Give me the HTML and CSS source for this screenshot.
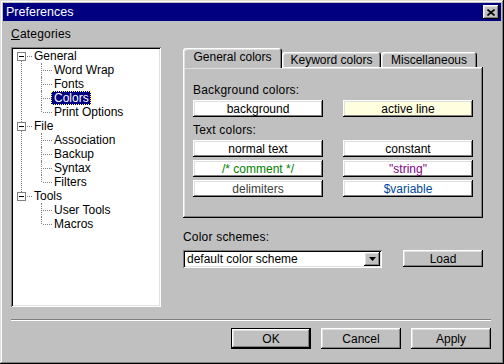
FILE: index.html
```html
<!DOCTYPE html>
<html lang="en">
<head>
<meta charset="UTF-8" />
<title>Preferences</title>
<link rel="stylesheet" href="styles.css">
</head>
<body>

<div class="window">
  <div class="titlebar">
    <span class="title">Preferences</span>
    <span class="close-btn" aria-label="Close">
      <svg width="8" height="7" viewBox="0 0 8 7"><path d="M0.5 0.5 L7.5 6.5 M7.5 0.5 L0.5 6.5" stroke="#000" stroke-width="1.6" fill="none"/></svg>
    </span>
  </div>

  <div class="client">
    <div class="main">
      <div class="left-col">
        <div class="field-label"><u>C</u>ategories</div>
        <div class="tree">
          <ul class="tree-root">
            <li class="group">
              <div class="top-row"><span class="expander"></span><span class="dash"></span><span class="node">General</span></div>
              <ul class="children">
                <li class="child"><span class="node">Word Wrap</span></li>
                <li class="child"><span class="node">Fonts</span></li>
                <li class="child"><span class="node selected">Colors</span></li>
                <li class="child"><span class="node">Print Options</span></li>
              </ul>
            </li>
            <li class="group">
              <div class="top-row"><span class="expander"></span><span class="dash"></span><span class="node">File</span></div>
              <ul class="children">
                <li class="child"><span class="node">Association</span></li>
                <li class="child"><span class="node">Backup</span></li>
                <li class="child"><span class="node">Syntax</span></li>
                <li class="child"><span class="node">Filters</span></li>
              </ul>
            </li>
            <li class="group">
              <div class="top-row"><span class="expander"></span><span class="dash"></span><span class="node">Tools</span></div>
              <ul class="children">
                <li class="child"><span class="node">User Tools</span></li>
                <li class="child"><span class="node">Macros</span></li>
              </ul>
            </li>
          </ul>
        </div>
      </div>

      <div class="right-col">
        <div class="tabs">
          <div class="tab active tab-general">General colors</div>
          <div class="tab tab-keyword">Keyword colors</div>
          <div class="tab tab-misc">Miscellaneous</div>
        </div>
        <div class="tab-page">
          <div class="field-label">Background colors:</div>
          <div class="color-grid">
            <div class="btn color-btn">background</div>
            <div class="btn color-btn active-line">active line</div>
          </div>
          <div class="field-label spaced">Text colors:</div>
          <div class="color-grid">
            <div class="btn color-btn">normal text</div>
            <div class="btn color-btn">constant</div>
            <div class="btn color-btn c-comment">/* comment */</div>
            <div class="btn color-btn c-string">"string"</div>
            <div class="btn color-btn c-delim">delimiters</div>
            <div class="btn color-btn c-var">$variable</div>
          </div>
        </div>

        <div class="field-label schemes-label">Color schemes:</div>
        <div class="schemes-row">
          <div class="select">
            <span class="select-text">default color scheme</span>
            <span class="btn arrow-btn">
              <svg width="7" height="4" viewBox="0 0 7 4"><path d="M0 0 H7 L3.5 4 Z" fill="#000"/></svg>
            </span>
          </div>
          <div class="btn load-btn">Load</div>
        </div>
      </div>
    </div>

    <div class="separator"></div>

    <div class="actions">
      <div class="btn dialog-btn default">OK</div>
      <div class="btn dialog-btn">Cancel</div>
      <div class="btn dialog-btn">Apply</div>
    </div>
  </div>
</div>

</body>
</html>
```

FILE: styles.css
```css
body {
  margin: 0;
  background: #c0c0c0;
  font-family: "Liberation Sans", Arial, sans-serif;
  font-size: 12px;
  color: #000;
}

ul {
  list-style: none;
  margin: 0;
  padding: 0;
}

/* Marco de la ventana */
.window {
  width: 504px;
  height: 364px;
  box-sizing: border-box;
  padding: 3px;
  background: #c0c0c0;
  box-shadow: inset -1px -1px #000, inset 1px 1px #dfdfdf,
              inset -2px -2px #808080, inset 2px 2px #fff;
  display: flex;
  flex-direction: column;
}

.titlebar {
  height: 18px;
  background: #000080;
  color: #fff;
  display: flex;
  align-items: center;
  justify-content: space-between;
  padding: 0 2px 0 3px;
}
.title {
  font-size: 12.5px;
}
.close-btn {
  width: 16px;
  height: 14px;
  background: #c0c0c0;
  box-shadow: inset -1px -1px #000, inset 1px 1px #fff,
              inset -2px -2px #808080, inset 2px 2px #dfdfdf;
  display: flex;
  align-items: center;
  justify-content: center;
}

/* Botones 3D */
.btn {
  box-sizing: border-box;
  background: #c0c0c0;
  box-shadow: inset -1px -1px #000, inset 1px 1px #fff,
              inset -2px -2px #808080, inset 2px 2px #dfdfdf;
  display: flex;
  align-items: center;
  justify-content: center;
  line-height: 14px;
}

.client {
  flex: 1;
  padding: 6px 10px 12px 8px;
  display: flex;
  flex-direction: column;
}

.main {
  display: flex;
  height: 280px;
}

.field-label {
  line-height: 14px;
  height: 14px;
  white-space: nowrap;
  letter-spacing: 0.2px;
}

/* Arbol de categorias */
.left-col {
  width: 150px;
}
.tree {
  margin-top: 6px;
  height: 260px;
  box-sizing: border-box;
  padding: 2px;
  background: #fff;
  box-shadow: inset 1px 1px #808080, inset -1px -1px #fff,
              inset 2px 2px #000, inset -2px -2px #dfdfdf;
}
.group {
  position: relative;
}
.group:not(:last-child)::before {
  content: "";
  position: absolute;
  left: 8px;
  top: 7px;
  height: 100%;
  border-left: 1px dotted #808080;
}
.top-row {
  height: 14px;
  display: flex;
  align-items: center;
  padding-left: 4px;
}
.expander {
  width: 9px;
  height: 9px;
  box-sizing: border-box;
  border: 1px solid #808080;
  background: #fff;
  position: relative;
  z-index: 1;
  display: flex;
  align-items: center;
  justify-content: center;
}
.expander::after {
  content: "";
  width: 5px;
  height: 1px;
  background: #000;
}
.dash {
  width: 5px;
  border-top: 1px dotted #808080;
  margin: 0 1px 0 1px;
}
.node {
  line-height: 14px;
  padding: 0 2px 0 1px;
  white-space: nowrap;
}
.child {
  position: relative;
  height: 14px;
  display: flex;
  align-items: center;
  padding-left: 38px;
}
.child::before {
  content: "";
  position: absolute;
  left: 28px;
  top: 0;
  bottom: 0;
  border-left: 1px dotted #808080;
}
.child:last-child::before {
  bottom: 7px;
}
.child::after {
  content: "";
  position: absolute;
  left: 30px;
  top: 7px;
  width: 9px;
  border-top: 1px dotted #808080;
}
.child .node {
  padding: 0 2px 0 3px;
}
.selected {
  background: #000080;
  color: #fff;
  outline: 1px dotted #ffff80;
  outline-offset: -1px;
}

/* Pestañas */
.right-col {
  width: 300px;
  margin-left: 22px;
  padding-top: 21px;
}
.tabs {
  display: flex;
  align-items: flex-end;
  height: 19px;
}
.tab {
  box-sizing: border-box;
  height: 15px;
  padding-top: 1px;
  line-height: 14px;
  text-align: center;
  white-space: nowrap;
  border-radius: 3px 3px 0 0;
  box-shadow: inset 1px 1px #fff, inset -1px 0 #000,
              inset -2px 0 #808080, inset 2px 2px #dfdfdf;
}
.tab.active {
  height: 20px;
  margin-bottom: -1px;
  padding-top: 2px;
  position: relative;
  z-index: 1;
  background: #c0c0c0;
}
.tab-general { width: 99px; }
.tab-keyword { width: 99px; }
.tab-misc { width: 96px; }

.tab-page {
  height: 151px;
  box-sizing: border-box;
  padding: 16px 10px 0 10px;
  box-shadow: inset -1px -1px #000, inset 1px 1px #fff,
              inset -2px -2px #808080, inset 2px 2px #dfdfdf;
}
.field-label.spaced {
  margin-top: 6px;
}
.color-grid {
  margin-top: 3px;
  display: grid;
  grid-template-columns: 130px 130px;
  column-gap: 20px;
  row-gap: 3px;
}
.color-btn {
  height: 17px;
  background: #fff;
}
.color-btn.active-line { background: #ffffe0; }
.c-comment { color: #008000; }
.c-string { color: #800080; }
.c-delim { color: #404040; }
.c-var { color: #00489a; }

/* Esquemas de color */
.schemes-label {
  margin-top: 12px;
}
.schemes-row {
  margin-top: 6px;
  display: flex;
  align-items: flex-start;
}
.select {
  width: 199px;
  height: 18px;
  box-sizing: border-box;
  padding: 2px;
  background: #fff;
  display: flex;
  align-items: center;
  box-shadow: inset 1px 1px #808080, inset -1px -1px #fff,
              inset 2px 2px #000, inset -2px -2px #dfdfdf;
}
.select-text {
  padding-left: 2px;
  flex: 1;
  white-space: nowrap;
}
.arrow-btn {
  width: 16px;
  height: 14px;
}
.load-btn {
  width: 80px;
  height: 17px;
  margin-left: 21px;
}

.separator {
  margin-top: 12px;
  height: 0;
  border-top: 1px solid #808080;
  border-bottom: 1px solid #fff;
}

.actions {
  margin-top: 7px;
  display: flex;
  justify-content: flex-end;
  gap: 10px;
}
.dialog-btn {
  width: 80px;
  height: 21px;
}
.dialog-btn.default {
  box-shadow: inset 0 0 0 1px #000, inset -2px -2px #000, inset 2px 2px #fff,
              inset -3px -3px #808080, inset 3px 3px #dfdfdf;
}
```
